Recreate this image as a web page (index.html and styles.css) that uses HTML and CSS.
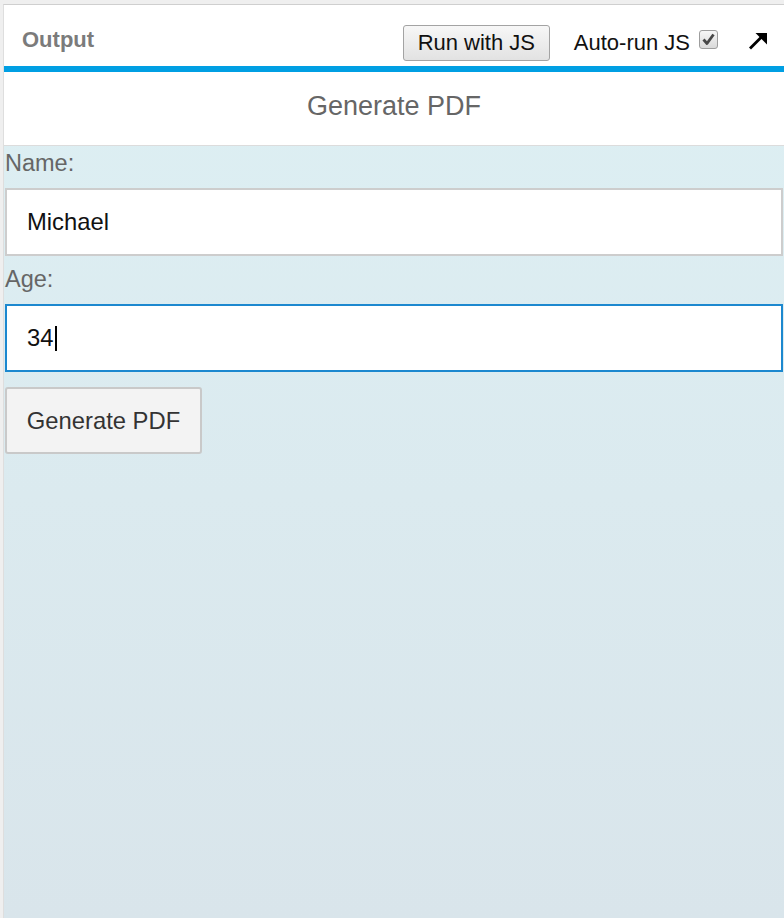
FILE: index.html
```html
<!DOCTYPE html>
<html lang="en">
<head>
<meta charset="utf-8">
<title>Output</title>
<link rel="stylesheet" href="styles.css">
</head>
<body>
<div class="app">
  <header class="toolbar">
    <span class="toolbar-title">Output</span>
    <button class="run-btn" type="button">Run with JS</button>
    <span class="autorun">Auto-run JS</span>
    <span class="check" aria-checked="true" role="checkbox">
      <svg width="17" height="17" viewBox="0 0 17 17" aria-hidden="true">
        <polyline points="3.5,8.5 7,12.5 13.5,3.5" fill="none" stroke="#474747" stroke-width="2.8" stroke-linejoin="round"/>
      </svg>
    </span>
    <svg class="popout" width="20" height="18" viewBox="0 0 20 18" aria-hidden="true">
      <line x1="2" y1="16.5" x2="14" y2="4.5" stroke="#000" stroke-width="2.8"/>
      <polygon points="7.5,1 19,1 19,12.5" fill="#000"/>
    </svg>
  </header>
  <div class="accent"></div>
  <main class="frame">
    <h1 class="page-title">Generate PDF</h1>
    <div class="form">
      <label class="label">Name:</label>
      <div class="input" role="textbox">Michael</div>
      <label class="label">Age:</label>
      <div class="input focused" role="textbox">34<span class="caret"></span></div>
      <button class="gen-btn" type="button">Generate PDF</button>
    </div>
  </main>
</div>
</body>
</html>
```

FILE: styles.css
```css
html, body {
  margin: 0;
  padding: 0;
}
body {
  background: #efefef;
  padding: 4px 0 0 3px;
  font-family: "Liberation Sans", Arial, sans-serif;
  height: 918px;
  box-sizing: border-box;
  overflow: hidden;
}
.app {
  border-top: 1px solid #cfcfcf;
  border-left: 1px solid #dedede;
  height: 913px;
  display: flex;
  flex-direction: column;
  background: #fff;
}
.toolbar {
  height: 61px;
  box-sizing: border-box;
  padding: 14px 16px 0 18px;
  display: flex;
  align-items: center;
  background: #fff;
}
.toolbar-title {
  font-weight: bold;
  font-size: 22px;
  color: #7b7b7b;
  margin-top: -5px;
}
.run-btn {
  margin-left: auto;
  width: 147px;
  height: 36px;
  font-family: "Liberation Sans", Arial, sans-serif;
  font-size: 22px;
  color: #111;
  background: linear-gradient(#f7f7f7, #e2e2e2);
  border: 1px solid #a3a3a3;
  border-radius: 3px;
  padding: 0;
}
.autorun {
  margin-left: 24px;
  font-size: 22px;
  color: #111;
}
.check {
  margin-left: 9px;
  width: 19px;
  height: 19px;
  box-sizing: border-box;
  border: 1px solid #9d9d9d;
  border-radius: 3px;
  background: linear-gradient(#f6f6f6, #d9d9d9);
  display: flex;
  align-items: center;
  justify-content: center;
  margin-top: -7px;
}
.popout {
  margin-left: 30px;
  margin-top: -3px;
}
.accent {
  height: 6px;
  background: #009fe3;
}
.frame {
  flex: 1;
  display: flex;
  flex-direction: column;
  background: linear-gradient(#ddeff3, #d9e5eb);
}
.page-title {
  margin: 0;
  height: 74px;
  box-sizing: border-box;
  padding-bottom: 5px;
  display: flex;
  align-items: center;
  justify-content: center;
  background: #fff;
  border-bottom: 1px solid #dcdcdc;
  font-size: 27px;
  font-weight: normal;
  color: #666;
}
.form {
  display: flex;
  flex-direction: column;
  align-items: flex-start;
  padding: 0 1px 0 1px;
}
.label {
  display: block;
  font-size: 23.5px;
  line-height: 26px;
  padding-top: 4px;
  margin-bottom: 12px;
  color: #666;
}
.input {
  align-self: stretch;
  height: 68px;
  box-sizing: border-box;
  border: 2px solid #cdcdcd;
  background: #fff;
  padding: 0 20px;
  display: flex;
  align-items: center;
  font-size: 23.8px;
  color: #111;
  margin-bottom: 6px;
}
.input.focused {
  border-color: #1c88cf;
}
.caret {
  display: inline-block;
  width: 1.5px;
  height: 25px;
  background: #000;
  margin-left: 2px;
}
.gen-btn {
  margin-top: 9px;
  width: 197px;
  height: 67px;
  box-sizing: border-box;
  border: 2px solid #c9c9c9;
  border-radius: 3px;
  background: #f3f3f3;
  font-family: "Liberation Sans", Arial, sans-serif;
  font-size: 23.8px;
  color: #333;
  padding: 0;
}
```
